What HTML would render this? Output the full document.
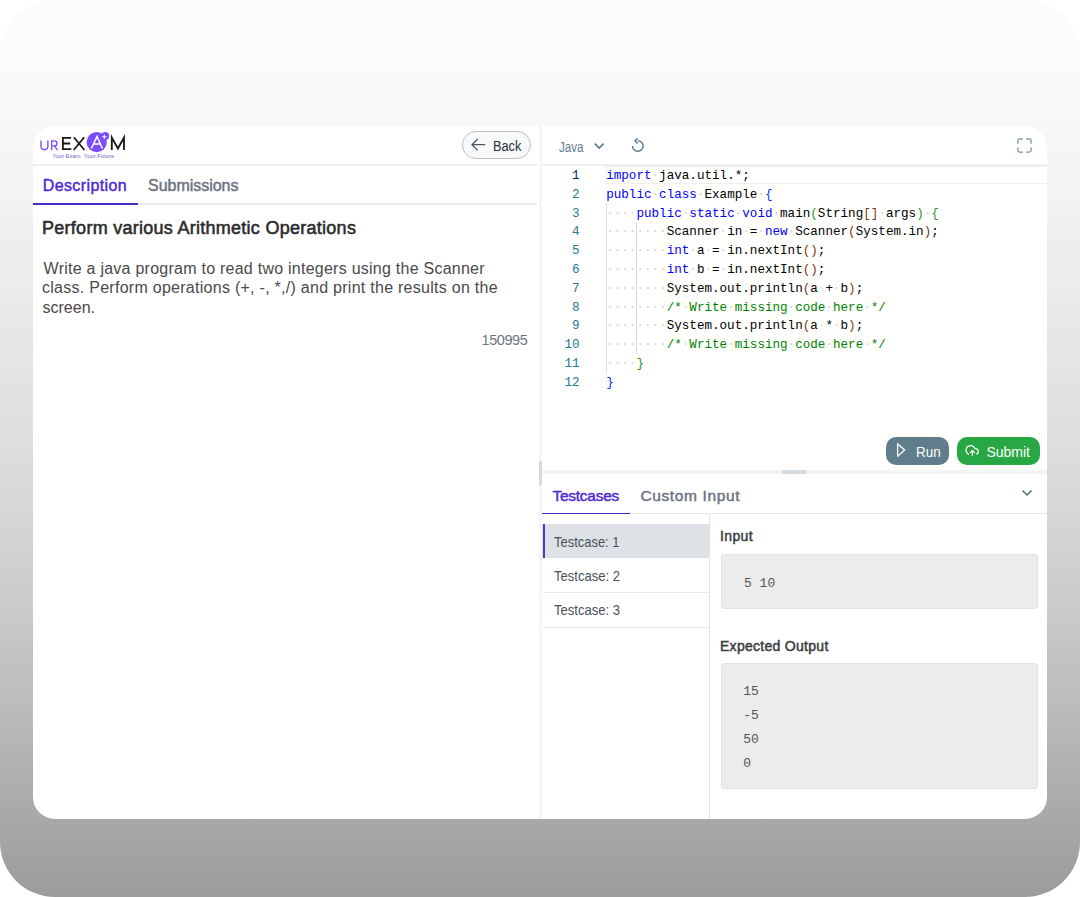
<!DOCTYPE html>
<html><head><meta charset="utf-8">
<style>
*{box-sizing:border-box;margin:0;padding:0}
html,body{width:1080px;height:897px;overflow:hidden;background:#fff;font-family:"Liberation Sans",sans-serif}
.abs{position:absolute}
.t{position:absolute;white-space:pre;line-height:1}
.mono{font-family:"Liberation Mono",monospace}
#frame{position:absolute;left:0;top:0;width:1080px;height:897px;border-radius:55px;
 background:linear-gradient(to bottom,#fcfcfc 0%,#fbfbfb 5.6%,#f6f6f6 16.7%,#eaeaea 33.4%,#dddddd 50.2%,#cccccc 66.9%,#b4b4b4 83.6%,#9e9e9e 98.1%,#9c9c9c 100%)}
#card{position:absolute;left:33px;top:126px;width:1014px;height:693px;background:#fff;border-radius:22px;overflow:hidden}
.code{position:absolute;left:606.2px;font-family:"Liberation Mono",monospace;font-size:12.6px;line-height:1;white-space:pre;color:#000}
.ln{position:absolute;left:539.5px;width:40px;text-align:right;font-family:"Liberation Mono",monospace;font-size:12.6px;line-height:1;color:#237893}
.k{color:#0000ff}
.c{color:#008000}
.b1{color:#0431fa}.b2{color:#319331}.b3{color:#7b3814}
.ws{color:#d3d3d3}
</style></head>
<body>
<div id="frame"></div>
<div id="card"></div>

<!-- LEFT HEADER -->
<div class="abs" style="left:33px;top:164px;width:504px;height:2px;background:#eef0f3"></div>
<!-- logo -->
<svg class="abs" style="left:36px;top:128px" width="96" height="34" viewBox="36 128 96 34">
 <g fill="none" stroke-linecap="butt" stroke-linejoin="miter">
  <path d="M41 140.6V146.3A3.35 3.35 0 0 0 47.9 146.3V140.6" stroke="#7c4dff" stroke-width="1.35"/>
  <path d="M51.7 150.2V140.9H54.4A2.5 2.5 0 0 1 54.4 145.9H51.7M54.3 145.9L57.6 150.2" stroke="#7c4dff" stroke-width="1.35"/>
  <path d="M71.1 137.9H62.9V149.2H71.3M62.9 143.5H70.2" stroke="#1a1a1a" stroke-width="1.8"/>
  <path d="M73.9 137.2L84.4 150M84.2 137.2L73.7 150" stroke="#1a1a1a" stroke-width="1.8"/>
  <path d="M111.8 150V137.6L117.9 148.5L124 137.6V150" stroke="#1a1a1a" stroke-width="1.85"/>
 </g>
 <circle cx="96.7" cy="142.2" r="10.1" fill="#7c4dff"/>
 <circle cx="105.2" cy="136" r="3.9" fill="#7c4dff"/>
 <path d="M91.4 148.5L97 136.6L102.4 148.5M93.4 144H100.5" fill="none" stroke="#fff" stroke-width="1.5"/>
 <path d="M104.3 134.6V139M102.1 136.8H106.5" fill="none" stroke="#fff" stroke-width="1"/>
</svg>
<div class="t" id="tag" style="left:52.4px;top:153.6px;font-size:5.6px;color:#6a58d0;letter-spacing:0.12px;white-space:pre">Your Exam  Your Future</div>

<!-- back button -->
<div class="abs" style="left:462.3px;top:131px;width:68.7px;height:27.7px;border:1px solid #bfbfbf;border-radius:14px;background:#f8f9fa"></div>
<svg class="abs" style="left:460px;top:128px" width="40" height="34" viewBox="460 128 40 34"><path d="M485.2 144.7H472M477.7 139L472 144.7L477.7 150.4" fill="none" stroke="#455a64" stroke-width="1.25"/></svg>
<div class="t" id="back" style="left:492.84px;top:139.00px;font-size:14px;color:#263238;transform:scaleX(0.9083);transform-origin:0 0;">Back</div>

<!-- divider -->
<div class="abs" style="left:538.5px;top:126px;width:3.5px;height:693px;background:#f5f6f8"></div>

<!-- tabs -->
<div class="t" id="desc" style="left:42.70px;top:178.00px;font-size:16px;color:#4e2ad0;-webkit-text-stroke:0.45px #4e2ad0;letter-spacing:0.400px;">Description</div>
<div class="t" id="subm" style="left:148.00px;top:178.00px;font-size:16px;color:#6b7280;-webkit-text-stroke:0.45px #6b7280;letter-spacing:-0.030px;">Submissions</div>
<div class="abs" style="left:33px;top:203px;width:504px;height:2px;background:#e5e7eb"></div>
<div class="abs" style="left:33px;top:203.2px;width:104.5px;height:2px;background:#4b2bc8"></div>

<div class="t" id="title" style="left:42.00px;top:219.00px;font-size:18px;color:#2b2b2b;-webkit-text-stroke:0.55px #2b2b2b;letter-spacing:0.272px;">Perform various Arithmetic Operations</div>
<div class="t" id="p1" style="left:43.60px;top:261.00px;font-size:16px;color:#4a4a4a;letter-spacing:0.248px;">Write a java program to read two integers using the Scanner</div>
<div class="t" id="p2" style="left:42.00px;top:280.00px;font-size:16px;color:#4a4a4a;letter-spacing:0.271px;">class. Perform operations (+, -, *,/) and print the results on the</div>
<div class="t" id="p3" style="left:42.60px;top:300.00px;font-size:16px;color:#4a4a4a;letter-spacing:-0.017px;">screen.</div>
<div class="t" id="num" style="left:481.60px;top:333.00px;font-size:14.5px;color:#6c757d;letter-spacing:-0.440px;">150995</div>

<!-- RIGHT HEADER -->
<div class="abs" style="left:542px;top:164px;width:505px;height:2px;background:#eef0f3"></div>
<div class="t" id="java" style="left:558.70px;top:140.00px;font-size:14px;color:#607d8b;transform:scaleX(0.8300);transform-origin:0 0;">Java</div>
<svg class="abs" style="left:0;top:0" width="1080" height="200" viewBox="0 0 1080 200">
 <path d="M594.8 143.6L599.2 148L603.6 143.6" fill="none" stroke="#546e7a" stroke-width="1.5"/>
 <path d="M632.5 146A5.3 5.3 0 1 0 637.8 140.7" fill="none" stroke="#58778a" stroke-width="1.4"/>
 <path d="M637.6 138.2L635.1 140.85L637.6 143.5" fill="none" stroke="#58778a" stroke-width="1.5"/>
 <path d="M1017.9 143.7V140.7Q1017.9 138.9 1019.7 138.9H1022.9M1026.1 138.9H1029.3Q1031.1 138.9 1031.1 140.7V143.7M1031.1 147.4V150.2Q1031.1 152 1029.3 152H1026.1M1022.9 152H1019.7Q1017.9 152 1017.9 150.2V147.4" fill="none" stroke="#7590a0" stroke-width="1.25"/>
</svg>

<!-- code area -->
<div class="abs" style="left:542px;top:166px;width:505px;height:305px;background:#fffffe"></div>
<div class="abs" style="left:606px;top:165.5px;width:441px;height:18.5px;border:1px solid #eeeeee;border-right:none"></div>
<div class="abs" style="left:606px;top:203px;width:1px;height:170px;background:#d9d9d9"></div>
<div class="abs" style="left:636px;top:222px;width:1px;height:132px;background:#d9d9d9"></div>

<div class="ln" style="top:170px;color:#0b216f">1</div>
<div class="ln" style="top:189px">2</div>
<div class="ln" style="top:208px">3</div>
<div class="ln" style="top:226px">4</div>
<div class="ln" style="top:245px">5</div>
<div class="ln" style="top:264px">6</div>
<div class="ln" style="top:283px">7</div>
<div class="ln" style="top:302px">8</div>
<div class="ln" style="top:320px">9</div>
<div class="ln" style="top:339px">10</div>
<div class="ln" style="top:358px">11</div>
<div class="ln" style="top:377px">12</div>

<div class="code" style="top:170px"><span class="k">import</span><span class="ws">·</span>java.util.*;</div>
<div class="code" style="top:189px"><span class="k">public</span><span class="ws">·</span><span class="k">class</span><span class="ws">·</span>Example<span class="ws">·</span><span class="b1">{</span></div>
<div class="code" style="top:208px"><span class="ws">····</span><span class="k">public</span><span class="ws">·</span><span class="k">static</span><span class="ws">·</span><span class="k">void</span><span class="ws">·</span>main<span class="b2">(</span>String<span class="b3">[]</span><span class="ws">·</span>args<span class="b2">)</span><span class="ws">·</span><span class="b2">{</span></div>
<div class="code" style="top:226px"><span class="ws">········</span>Scanner<span class="ws">·</span>in<span class="ws">·</span>=<span class="ws">·</span><span class="k">new</span><span class="ws">·</span>Scanner<span class="b3">(</span>System.in<span class="b3">)</span>;</div>
<div class="code" style="top:245px"><span class="ws">········</span><span class="k">int</span><span class="ws">·</span>a<span class="ws">·</span>=<span class="ws">·</span>in.nextInt<span class="b3">()</span>;</div>
<div class="code" style="top:264px"><span class="ws">········</span><span class="k">int</span><span class="ws">·</span>b<span class="ws">·</span>=<span class="ws">·</span>in.nextInt<span class="b3">()</span>;</div>
<div class="code" style="top:283px"><span class="ws">········</span>System.out.println<span class="b3">(</span>a<span class="ws">·</span>+<span class="ws">·</span>b<span class="b3">)</span>;</div>
<div class="code" style="top:302px"><span class="ws">········</span><span class="c">/*<span class="ws">·</span>Write<span class="ws">·</span>missing<span class="ws">·</span>code<span class="ws">·</span>here<span class="ws">·</span>*/</span></div>
<div class="code" style="top:320px"><span class="ws">········</span>System.out.println<span class="b3">(</span>a<span class="ws">·</span>*<span class="ws">·</span>b<span class="b3">)</span>;</div>
<div class="code" style="top:339px"><span class="ws">········</span><span class="c">/*<span class="ws">·</span>Write<span class="ws">·</span>missing<span class="ws">·</span>code<span class="ws">·</span>here<span class="ws">·</span>*/</span></div>
<div class="code" style="top:358px"><span class="ws">····</span><span class="b2">}</span></div>
<div class="code" style="top:377px"><span class="b1">}</span></div>

<!-- buttons -->
<div class="abs" style="left:885.5px;top:437px;width:63.5px;height:27.5px;border-radius:10px;background:#607d8b"></div>
<svg class="abs" style="left:0;top:400px" width="1080" height="80" viewBox="0 400 1080 80">
 <path d="M897.6 443.7V456.3L904.6 450Z" fill="none" stroke="#fff" stroke-width="1.3" stroke-linejoin="round"/>
</svg>
<div class="t" id="run" style="left:915.74px;top:445.00px;font-size:14px;color:#ffffff;transform:scaleX(0.9583);transform-origin:0 0;">Run</div>
<div class="abs" style="left:956.5px;top:437px;width:83px;height:27.5px;border-radius:10px;background:#28a745"></div>
<svg class="abs" style="left:0;top:400px" width="1080" height="80" viewBox="0 400 1080 80">
 <path d="M968.6 454.5A4.7 4.7 0 1 1 975.0 448.6A2.86 2.86 0 0 1 976.7 454.0" fill="none" stroke="#fff" stroke-width="1.25" stroke-linecap="round"/>
 <path d="M972.4 455.6V450.6M970.3 452.6L972.4 450.5L974.5 452.6" fill="none" stroke="#fff" stroke-width="1.25" stroke-linecap="round" stroke-linejoin="round"/>
</svg>
<div class="t" id="submit" style="left:986.50px;top:445.00px;font-size:14px;color:#ffffff;letter-spacing:-0.040px;">Submit</div>

<!-- resizers -->
<div class="abs" style="left:542px;top:470.3px;width:505px;height:3.7px;background:#f3f4f6"></div>
<div class="abs" style="left:782px;top:470.3px;width:24px;height:3.7px;background:#d5dbe0"></div>
<div class="abs" style="left:538.5px;top:461px;width:3.5px;height:23.6px;background:#d5dae0"></div>

<!-- lower tabs -->
<div class="t" id="tc" style="left:552.40px;top:488.00px;font-size:15.5px;color:#4e2ad0;-webkit-text-stroke:0.45px #4e2ad0;letter-spacing:-0.250px;">Testcases</div>
<div class="t" id="ci" style="left:640.40px;top:488.00px;font-size:15.5px;color:#6b7280;-webkit-text-stroke:0.45px #6b7280;letter-spacing:0.636px;">Custom Input</div>
<div class="abs" style="left:542px;top:512.5px;width:505px;height:1.5px;background:#e3e7eb"></div>
<div class="abs" style="left:542px;top:512.7px;width:88px;height:1.7px;background:#4422c6"></div>
<svg class="abs" style="left:1021px;top:488px" width="12" height="10" viewBox="0 0 12 10"><path d="M1.5 2.5L6 7L10.5 2.5" fill="none" stroke="#4b6a7a" stroke-width="1.45"/></svg>

<!-- testcase list -->
<div class="abs" style="left:709px;top:514px;width:1px;height:305px;background:#dee2e6"></div>
<div class="abs" style="left:542px;top:524px;width:167px;height:34px;background:#dee2e6"></div>
<div class="abs" style="left:542.5px;top:524px;width:2px;height:34px;background:#5334c8"></div>
<div class="abs" style="left:543px;top:592px;width:166px;height:1px;background:#e9ecef"></div>
<div class="abs" style="left:543px;top:626.5px;width:166px;height:1px;background:#e9ecef"></div>
<div class="t" id="t1" style="left:554.30px;top:535.00px;font-size:14.5px;color:#495057;transform:scaleX(0.8932);transform-origin:0 0;">Testcase: 1</div>
<div class="t" id="t2" style="left:554.30px;top:569.00px;font-size:14.5px;color:#495057;transform:scaleX(0.9000);transform-origin:0 0;">Testcase: 2</div>
<div class="t" id="t3" style="left:554.30px;top:603.00px;font-size:14.5px;color:#495057;transform:scaleX(0.9000);transform-origin:0 0;">Testcase: 3</div>

<!-- input/output -->
<div class="t" id="inp" style="left:720.00px;top:529.00px;font-size:14px;color:#343a40;-webkit-text-stroke:0.45px #343a40;letter-spacing:0.375px;">Input</div>
<div class="abs" style="left:721px;top:554px;width:317px;height:55px;background:#ececec;border:1px solid #e2e2e2;border-radius:3px"></div>
<div class="t mono" style="left:744px;top:577px;font-size:13px;color:#555">5 10</div>
<div class="t" id="exp" style="left:720.00px;top:639.00px;font-size:14px;color:#343a40;-webkit-text-stroke:0.45px #343a40;letter-spacing:0.286px;">Expected Output</div>
<div class="abs" style="left:720.5px;top:663px;width:317.5px;height:126px;background:#ececec;border:1px solid #e2e2e2;border-radius:3px"></div>
<div class="t mono" style="left:743.3px;top:679.5px;font-size:13px;color:#555;line-height:24px">15
-5
50
0</div>
</body></html>
